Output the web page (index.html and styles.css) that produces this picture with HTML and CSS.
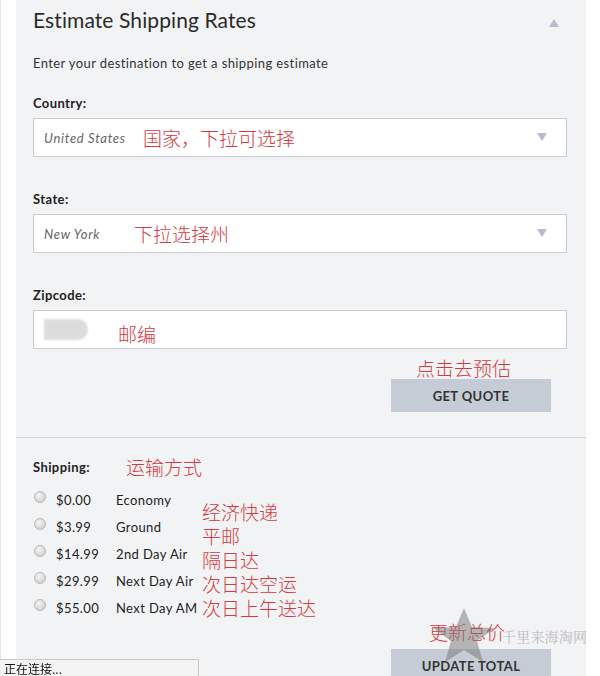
FILE: index.html
```html
<!DOCTYPE html>
<html lang="zh">
<head>
<meta charset="utf-8">
<title>Estimate Shipping Rates</title>
<link rel="stylesheet" href="styles.css">
</head>
<body>
<div class="page">
  <div class="panel">
    <section class="estimate">
      <header class="head">
        <h2 class="title">Estimate Shipping Rates</h2>
        <span class="caret caret-up"></span>
      </header>
      <p class="intro">Enter your destination to get a shipping estimate</p>

      <div class="field first">
        <label class="label">Country:</label>
        <div class="box">
          <span class="val">United States</span>
          <span class="note note-country">国家，下拉可选择</span>
          <span class="caret caret-down"></span>
        </div>
      </div>

      <div class="field">
        <label class="label">State:</label>
        <div class="box">
          <span class="val">New York</span>
          <span class="note note-state">下拉选择州</span>
          <span class="caret caret-down"></span>
        </div>
      </div>

      <div class="field">
        <label class="label">Zipcode:</label>
        <div class="box">
          <span class="blur"></span>
          <span class="note note-zip">邮编</span>
        </div>
      </div>

      <div class="actions">
        <span class="note note-btn">点击去预估</span>
        <button class="btn" type="button">GET QUOTE</button>
      </div>
    </section>

    <section class="shipping">
      <div class="ship-head">
        <span class="label ship-label">Shipping:</span>
        <span class="note note-head">运输方式</span>
      </div>
      <div class="ship-body">
        <ul class="rates">
          <li class="rate"><input type="radio" name="r" class="radio"><span class="price">$0.00</span><span class="name">Economy</span></li>
          <li class="rate"><input type="radio" name="r" class="radio"><span class="price">$3.99</span><span class="name">Ground</span></li>
          <li class="rate"><input type="radio" name="r" class="radio"><span class="price">$14.99</span><span class="name">2nd Day Air</span></li>
          <li class="rate"><input type="radio" name="r" class="radio"><span class="price">$29.99</span><span class="name">Next Day Air</span></li>
          <li class="rate"><input type="radio" name="r" class="radio"><span class="price">$55.00</span><span class="name">Next Day AM</span></li>
        </ul>
        <ul class="notes">
          <li class="note">经济快递</li>
          <li class="note">平邮</li>
          <li class="note">隔日达</li>
          <li class="note">次日达空运</li>
          <li class="note">次日上午送达</li>
        </ul>
      </div>
      <div class="actions actions-total">
        <span class="note note-btn2">更新总价</span>
        <button class="btn" type="button">UPDATE TOTAL</button>
      </div>
      <div class="watermark">
        <svg class="star" viewBox="0 0 62 54" width="62" height="54"><polygon points="31,0 39,19 62,20 44,33 50,54 31,42 12,54 18,33 0,20 23,19" fill="#777"/></svg>
        <span class="wm-text">千里来海淘网</span>
      </div>
    </section>
  </div>
</div>
<div class="status">正在连接...</div>
</body>
</html>
```

FILE: styles.css
```css
* { box-sizing: border-box; }
html, body { margin: 0; padding: 0; overflow: hidden; background: #ffffff; }
body {
  font-family: Lato, "Noto Sans", sans-serif;
  color: #222;
  font-size: 13px;
  letter-spacing: 0.4px;
}
.page {
  padding-left: 15px;
  border-left: 1px solid #e6e6e6;
  min-height: 676px;
}
.panel {
  width: 570px;
  background: #f2f3f5;
  min-height: 700px;
}
.estimate {
  padding: 6px 19px 25px 17px;
  border-bottom: 1px solid #d3d6db;
}
.head {
  display: flex;
  align-items: center;
  justify-content: space-between;
}
.title {
  margin: 0;
  font-size: 21px;
  line-height: 28px;
  font-weight: 400;
  letter-spacing: 0.1px;
  color: #2a2a2a;
}
.caret { display: block; width: 0; height: 0; }
.caret-up {
  margin-right: 8px;
  margin-top: 5px;
  border-left: 5.5px solid transparent;
  border-right: 5.5px solid transparent;
  border-bottom: 8px solid #b7bdca;
}
.caret-down {
  margin-left: auto;
  margin-right: 19px;
  margin-top: -2px;
  border-left: 5px solid transparent;
  border-right: 5px solid transparent;
  border-top: 8px solid #b7bdca;
}
.intro {
  margin: 20px 0 0;
  line-height: 18px;
  color: #333;
}
.field { margin-top: 33px; }
.field.first { margin-top: 22px; }
.label {
  display: block;
  font-weight: 700;
  line-height: 18px;
  margin-bottom: 6px;
  color: #222;
}
.box {
  height: 39px;
  background: #fff;
  border: 1px solid #c9ccd1;
  display: flex;
  align-items: center;
  padding-left: 10px;
}
.val {
  font-style: italic;
  color: #666;
  letter-spacing: 0.7px;
  width: 99px;
}
.note {
  font-family: "Noto Sans CJK SC", sans-serif;
  font-weight: 300;
  font-size: 19px;
  line-height: 24px;
  letter-spacing: 0;
  color: #d6393f;
}
.note-state { margin-left: -9px; }
.note-zip { margin-top: 8px; }
.blur {
  width: 44px;
  height: 21px;
  background: #dcdcdc;
  border-radius: 2px 11px 11px 2px;
  filter: blur(1px);
  margin-right: 30px;
}
.actions {
  display: flex;
  flex-direction: column;
  align-items: flex-start;
  width: 160px;
  margin-left: auto;
  margin-right: 16px;
  margin-top: 8px;
}
.note-btn, .note-btn2 { margin-left: 25px; line-height: 22px; }
.note-btn2 { margin-left: 38px; margin-bottom: 6px; }
.btn {
  width: 160px;
  height: 33px;
  border: 0;
  background: #c5ccd6;
  font-family: Lato, sans-serif;
  font-weight: 700;
  font-size: 13px;
  letter-spacing: 0.4px;
  color: #333;
  padding: 0;
}
.shipping {
  position: relative;
  padding: 20px 19px 0 17px;
}
.ship-head { display: flex; align-items: center; height: 18px; }
.ship-label { width: 93px; margin: 0; }
.note-head { line-height: 18px; }
.ship-body { display: flex; margin-top: 10px; }
.rates, .notes { list-style: none; margin: 0; padding: 0; }
.rates { flex: 0 0 169px; }
.rate {
  display: flex;
  align-items: center;
  height: 27px;
  color: #222;
}
.radio {
  appearance: none;
  -webkit-appearance: none;
  margin: 0 10px 0 1px;
  width: 12px;
  height: 12px;
  border-radius: 50%;
  border: 1px solid #b9b9b9;
  background: radial-gradient(circle at 40% 35%, #f4f4f4, #d2d2d2 75%);
  position: relative;
  top: -3px;
}
.price { width: 60px; }
.notes { padding-top: 14px; }
.actions-total { margin-right: 16px; margin-top: 0; }
.watermark {
  position: absolute;
  left: 417px;
  top: 170px;
  display: flex;
  align-items: center;
  white-space: nowrap;
  pointer-events: none;
}
.star { opacity: 0.5; filter: blur(0.6px); flex: none; }
.wm-text {
  font-family: "Noto Serif CJK SC", "Noto Sans CJK SC", serif;
  font-size: 14px;
  letter-spacing: 0.2px;
  color: #bdbdbd;
  margin-left: 7px;
  margin-top: 2px;
}
.status {
  position: fixed;
  left: 0;
  bottom: 0;
  width: 199px;
  height: 17px;
  background: #f3f3f3;
  border: 1px solid #c8c8c8;
  border-left: 0;
  border-bottom: 0;
  font-family: "Noto Sans CJK SC", sans-serif;
  font-size: 12px;
  line-height: 17px;
  letter-spacing: 0;
  padding-left: 4px;
  color: #111;
}
```
